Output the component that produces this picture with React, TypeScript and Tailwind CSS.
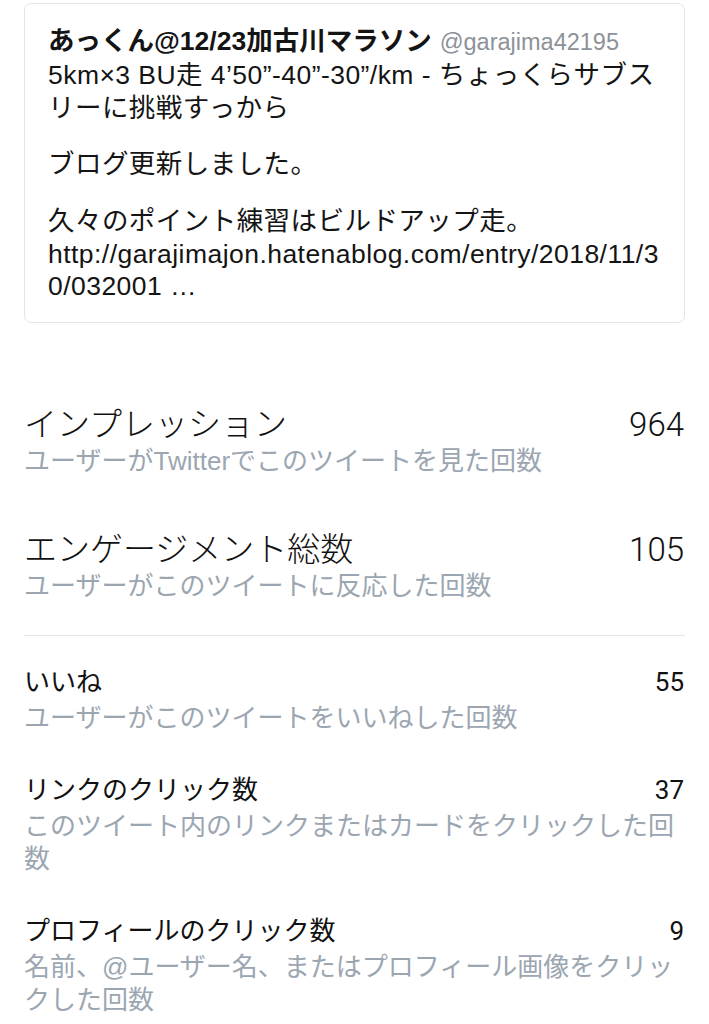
const font = { fontFamily: '"Liberation Sans", "Noto Sans CJK JP", sans-serif' };
const numFont = { fontFamily: 'Roboto, "Liberation Sans", sans-serif' };

type Metric = { title: string; desc: string; value: string };

const topMetrics: Metric[] = [
  { title: 'インプレッション', desc: 'ユーザーがTwitterでこのツイートを見た回数', value: '964' },
  { title: 'エンゲージメント総数', desc: 'ユーザーがこのツイートに反応した回数', value: '105' },
];

const detailMetrics: Metric[] = [
  { title: 'いいね', desc: 'ユーザーがこのツイートをいいねした回数', value: '55' },
  { title: 'リンクのクリック数', desc: 'このツイート内のリンクまたはカードをクリックした回数', value: '37' },
  { title: 'プロフィールのクリック数', desc: '名前、@ユーザー名、またはプロフィール画像をクリックした回数', value: '9' },
];

const TweetCard = () => (
  <div className="mx-[24px] mt-[3px] rounded-[7px] border border-[#e1e6ea] pl-[23px] pr-[16px] pt-[21px] pb-[19px] text-[26.5px] text-[#141414]">
    <div className="flex items-baseline whitespace-nowrap leading-[33px]">
      <span className="font-bold">あっくん@12/23加古川マラソン</span>
      <span className="ml-[8px] text-[23.5px] text-[#8c9298]">@garajima42195</span>
    </div>
    <div className="tracking-[0.45px]">
      <div className="leading-[32.5px] whitespace-nowrap">
        <div>5km×3 BU走 4’50”-40”-30”/km - ちょっくらサブス</div>
        <div>リーに挑戦すっから</div>
      </div>
      <div className="mt-[24px] leading-[32.5px] whitespace-nowrap">ブログ更新しました。</div>
      <div className="mt-[24.5px] leading-[32.5px] whitespace-nowrap">
        <div>久々のポイント練習はビルドアップ走。</div>
        <div>http://garajimajon.hatenablog.com/entry/2018/11/3</div>
        <div>0/032001 …</div>
      </div>
    </div>
  </div>
);

export default function App() {
  return (
    <div className="min-h-[1024px] w-[709px] bg-white" style={font}>
      <TweetCard />

      <div className="mx-[24px] mt-[83px]">
        {topMetrics.map((m, i) => (
          <div key={m.title} className={i > 0 ? 'mt-[53px]' : ''}>
            <div className="flex items-center justify-between text-[33px] font-light leading-[38px] text-[#111]">
              <span>{m.title}</span>
              <span className="mr-[1px]" style={numFont}>{m.value}</span>
            </div>
            <div className="mt-[1px] text-[26px] leading-[33px] text-[#9ba6b1]">{m.desc}</div>
          </div>
        ))}

        <div className="mt-[32px] h-px bg-[#e3e6e9]" />

        <div className="pt-[30px]">
          {detailMetrics.map((m, i) => (
            <div key={m.title} className={i > 0 ? 'mt-[39px]' : ''}>
              <div className="flex items-center justify-between text-[26px] leading-[33px] text-[#111]">
                <span>{m.title}</span>
                <span className="mr-[1px]" style={numFont}>{m.value}</span>
              </div>
              <div className="mt-[3px] text-[26px] leading-[33px] text-[#9ba6b1]">{m.desc}</div>
            </div>
          ))}
        </div>
      </div>
    </div>
  );
}
